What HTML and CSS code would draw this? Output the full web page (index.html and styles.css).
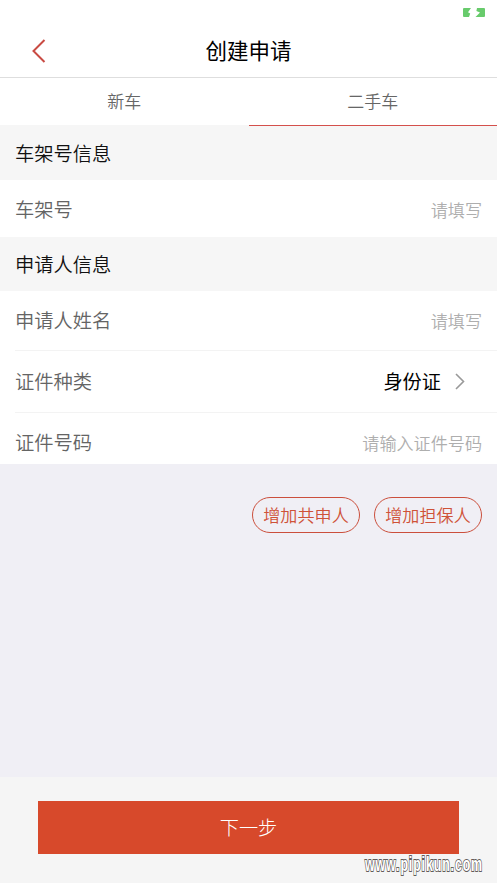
FILE: index.html
```html
<!DOCTYPE html>
<html lang="zh-CN">
<head>
<meta charset="utf-8">
<title>创建申请</title>
<link rel="stylesheet" href="styles.css">
</head>
<body>
<div class="app">
  <header class="header">
    <div class="status">
      <svg class="battery" width="22" height="9" viewBox="0 0 22 9"><path d="M1 0H8L5 4.2L7.2 5.6L6 9H1Q0 9 0 8V1Q0 0 1 0Z"/><path d="M14 0H21Q22 0 22 1V8Q22 9 21 9H12.5L17 4.6L13.4 3Z"/></svg>
    </div>
    <div class="navbar">
      <svg class="back" width="14" height="24" viewBox="0 0 14 24"><path d="M12.5 1L1.5 12L12.5 23"/></svg>
      <h1 class="title">创建申请</h1>
    </div>
  </header>
  <nav class="tabs">
    <div class="tab">新车</div>
    <div class="tab active">二手车</div>
  </nav>
  <h2 class="section">车架号信息</h2>
  <div class="row vin"><span class="label">车架号</span><span class="hint">请填写</span></div>
  <h2 class="section">申请人信息</h2>
  <div class="group">
    <div class="row"><span class="label">申请人姓名</span><span class="hint">请填写</span></div>
    <div class="row kind"><span class="label">证件种类</span><span class="value">身份证<svg class="chevron" width="10" height="17" viewBox="0 0 10 17"><path d="M1 1L8.5 8.5L1 16"/></svg></span></div>
    <div class="row last"><span class="label">证件号码</span><span class="hint">请输入证件号码</span></div>
  </div>
  <main class="actions">
    <button class="pill">增加共申人</button>
    <button class="pill">增加担保人</button>
  </main>
  <footer class="footer">
    <button class="next">下一步</button>
  </footer>
  <svg class="watermark" width="130" height="30" viewBox="0 0 130 30"><text x="3" y="18" textLength="118" lengthAdjust="spacingAndGlyphs">www.pipikun.com</text></svg>
</div>
</body>
</html>
```
FILE: styles.css
```css
* { box-sizing: border-box; }
body {
  margin: 0;
  font-family: "Noto Sans CJK SC", sans-serif;
  font-weight: 350;
  color: #111;
}
button { font: inherit; padding: 0; }
.app {
  position: relative;
  height: 883px;
  display: flex;
  flex-direction: column;
  background: #f0eff5;
  overflow: hidden;
}
.header {
  height: 78px;
  flex: none;
  background: #fff;
  border-bottom: 1px solid #dedede;
}
.status {
  height: 24px;
  display: flex;
  justify-content: flex-end;
  padding: 8px 12px 0 0;
}
.battery { fill: #68cb6c; }
.navbar {
  height: 53px;
  display: grid;
  grid-template-columns: 60px 1fr 60px;
  align-items: center;
}
.back {
  margin-left: 32px;
  fill: none;
  stroke: #c94b43;
  stroke-width: 2;
}
.title {
  margin: 0;
  padding-bottom: 2px;
  text-align: center;
  font-size: 21.5px;
  font-weight: 400;
  color: #000;
}
.tabs {
  height: 48px;
  flex: none;
  display: flex;
  background: linear-gradient(#fff 47px, #f6f6f6 47px);
}
.tab {
  flex: 1;
  display: flex;
  justify-content: center;
  line-height: 45px;
  font-size: 17px;
  color: #666;
}
.tab.active { border-bottom: 1px solid #d4504c; }
.section {
  height: 54px;
  flex: none;
  margin: 0;
  padding-left: 15px;
  background: #f6f6f6;
  font-size: 19.3px;
  line-height: 54px;
  font-weight: 350;
}
.row {
  height: 60px;
  display: flex;
  flex: none;
  justify-content: space-between;
  align-items: center;
  padding: 0 15px 1px 0;
  border-bottom: 1px solid #f3f3f3;
}
.vin {
  height: 57px;
  padding: 1px 15px 0;
  background: #fff;
  border: 0;
}
.group { background: #fff; padding-left: 15px; }
.kind { height: 62px; }
.last { height: 51px; padding-top: 8px; border: 0; }
.label { font-size: 19.3px; color: #646464; }
.hint { font-size: 17.1px; color: #aeaeae; }
.value {
  display: flex;
  align-items: center;
  gap: 14px;
  padding-right: 17px;
  font-size: 19.2px;
  font-weight: 400;
  color: #000;
}
.chevron { fill: none; stroke: #999; stroke-width: 1.6; }
.actions {
  flex: 1;
  display: flex;
  justify-content: flex-end;
  align-items: flex-start;
  gap: 14px;
  padding: 33px 15px 0 0;
}
.pill {
  width: 108px;
  height: 36px;
  padding-bottom: 2px;
  border: 1px solid #cb4f3c;
  border-radius: 18px;
  background: transparent;
  color: #cf5238;
  font-size: 17.1px;
}
.footer {
  height: 106px;
  flex: none;
  padding: 24px 38px 0;
  background: #f5f5f5;
}
.next {
  display: block;
  width: 100%;
  height: 53px;
  padding-bottom: 1px;
  border: 0;
  background: #d7492b;
  color: #fff;
  font-size: 19.2px;
  font-weight: 300;
}
.watermark {
  position: absolute;
  left: 362px;
  top: 853px;
  overflow: visible;
}
.watermark text {
  font-family: "Liberation Sans Narrow", "Liberation Sans", sans-serif;
  font-size: 20px;
  font-weight: 700;
  letter-spacing: 1.4px;
  fill: #fff;
  stroke: #625c5a;
  stroke-width: 1.8px;
  paint-order: stroke;
}
```
